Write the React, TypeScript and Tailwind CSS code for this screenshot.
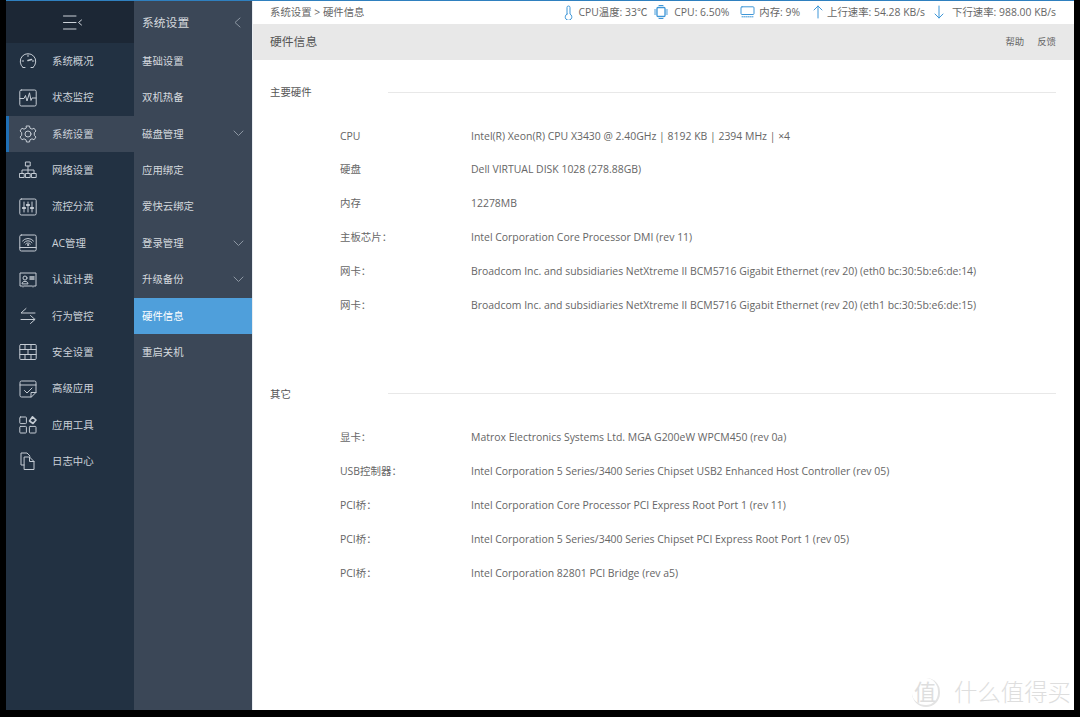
import type { ReactNode } from "react";

const stroke = { fill: "none", stroke: "currentColor", strokeWidth: 1, strokeLinecap: "round" as const, strokeLinejoin: "round" as const };

function Ico({ children, size = 18, className = "" }: { children: ReactNode, size?: number, className?: string }) {
    return <svg width={size} height={size} viewBox="0 0 18 18" className={className} {...stroke}>{children}</svg>
}

const icons: Record<string, ReactNode> = {
    gauge: <><path d="M4 15.5 A7.8 7.8 0 1 1 14 15.5" /><path d="M4 15.5 H6 M12 15.5 H14" /><path d="M9 8.5 L12.5 7.5" strokeWidth={1.6} /><path d="M9 3 V4.5 M3.2 9 H4.6 M14.8 9 H13.4" /></>,
    monitor: <><rect x="0.8" y="1" width="16.4" height="16" rx="1.5" /><path d="M1 9.5 H5 L6.5 6.5 L8 12 L10.5 3.8 L12 11.5 L13 9 H17" /></>,
    gear: <><circle cx="9" cy="9" r="3" /><path d="M7.5 1 H10.5 L11 3.2 L13 4.2 L15 3.2 L17 6 L15.3 7.6 V10.4 L17 12 L15 14.8 L13 13.8 L11 14.8 L10.5 17 H7.5 L7 14.8 L5 13.8 L3 14.8 L1 12 L2.7 10.4 V7.6 L1 6 L3 3.2 L5 4.2 L7 3.2 Z" /></>,
    network: <><rect x="6.8" y="1" width="4.4" height="4" /><rect x="0.8" y="12.5" width="4.4" height="4" /><rect x="6.8" y="12.5" width="4.4" height="4" /><rect x="12.8" y="12.5" width="4.4" height="4" /><path d="M9 5 V12.5 M3 12.5 V9 H15 V12.5" /></>,
    sliders: <><rect x="0.8" y="1" width="16.4" height="16" rx="1.5" /><path d="M5 4 V14 M9 4 V14 M13 4 V14" /><path d="M3.8 10 H6.2 M7.8 7 H10.2 M11.8 10 H14.2" strokeWidth={1.8} /></>,
    wifi: <><rect x="0.8" y="1" width="16.4" height="16" rx="1.5" /><path d="M1 13.5 H17" /><path d="M3.5 7 A7 7 0 0 1 14.5 7 M5 8.6 A5 5 0 0 1 13 8.6 M6.6 10 A3 3 0 0 1 11.4 10" /><circle cx="9" cy="11" r="0.7" /></>,
    card: <><path d="M3 15 H1 V2 H17 V15 H15 M5 15 H13" /><circle cx="6" cy="7" r="2" /><path d="M3 12.5 C3 9.5 9 9.5 9 12.5 Z" /><path d="M11 6 H15 M11 8 H15" strokeWidth={1.5} /><path d="M4 15 V16 M14 15 V16" /></>,
    swap: <><path d="M16 6 H2 L7 1.5" /><path d="M2 12.5 H16 L11.5 8.5 M16 12.5 L11.5 16.5" /></>,
    wall: <><rect x="0.8" y="1.5" width="16.4" height="15" rx="1" /><path d="M1 6.5 H17 M1 11.5 H17 M6 1.5 V6.5 M12 1.5 V6.5 M9 6.5 V11.5 M6 11.5 V16.5 M12 11.5 V16.5" /></>,
    note: <><path d="M12 17 H2.5 Q1 17 1 15.5 V2.5 Q1 1 2.5 1 H15.5 Q17 1 17 2.5 V12 Z" /><path d="M1 5 H17" /><path d="M5.5 10.5 L8 13 L13 8" /><path d="M12 17 V12.5 H17" /></>,
    apps: <><rect x="0.8" y="1" width="6.6" height="6.6" rx="0.8" /><rect x="0.8" y="10.4" width="6.6" height="6.6" rx="0.8" /><rect x="10.4" y="10.4" width="6.6" height="6.6" rx="0.8" /><path d="M13.5 0.8 L17 4 L14 7.5 L10.5 5 Z" strokeWidth={1.6} /></>,
    docs: <><path d="M5 13 H2 V1 H8 L11 4" /><path d="M5.5 5 H10.5 L15 9.5 V17.5 H5.5 Z" /><path d="M10.5 5 V9.5 H15" /></>,
};

const mainMenu = [
    { title: "系统概况", icon: "gauge" }, { title: "状态监控", icon: "monitor" }, { title: "系统设置", icon: "gear", active: true },
    { title: "网络设置", icon: "network" }, { title: "流控分流", icon: "sliders" }, { title: "AC管理", icon: "wifi" },
    { title: "认证计费", icon: "card" }, { title: "行为管控", icon: "swap" }, { title: "安全设置", icon: "wall" },
    { title: "高级应用", icon: "note" }, { title: "应用工具", icon: "apps" }, { title: "日志中心", icon: "docs" },
];

const subMenu = [
    { title: "基础设置" }, { title: "双机热备" }, { title: "磁盘管理", more: true }, { title: "应用绑定" }, { title: "爱快云绑定" },
    { title: "登录管理", more: true }, { title: "升级备份", more: true }, { title: "硬件信息", active: true }, { title: "重启关机" },
];

const mainHardware = [
    ["CPU", "Intel(R) Xeon(R) CPU X3430 @ 2.40GHz | 8192 KB | 2394 MHz | ×4"],
    ["硬盘", "Dell VIRTUAL DISK 1028 (278.88GB)"],
    ["内存", "12278MB"],
    ["主板芯片：", "Intel Corporation Core Processor DMI (rev 11)"],
    ["网卡：", "Broadcom Inc. and subsidiaries NetXtreme II BCM5716 Gigabit Ethernet (rev 20) (eth0 bc:30:5b:e6:de:14)"],
    ["网卡：", "Broadcom Inc. and subsidiaries NetXtreme II BCM5716 Gigabit Ethernet (rev 20) (eth1 bc:30:5b:e6:de:15)"],
];

const otherHardware = [
    ["显卡：", "Matrox Electronics Systems Ltd. MGA G200eW WPCM450 (rev 0a)"],
    ["USB控制器：", "Intel Corporation 5 Series/3400 Series Chipset USB2 Enhanced Host Controller (rev 05)"],
    ["PCI桥：", "Intel Corporation Core Processor PCI Express Root Port 1 (rev 11)"],
    ["PCI桥：", "Intel Corporation 5 Series/3400 Series Chipset PCI Express Root Port 1 (rev 05)"],
    ["PCI桥：", "Intel Corporation 82801 PCI Bridge (rev a5)"],
];

function Section({ title, rows, className }: { title: string, rows: string[][], className: string }) {
    return (
        <section className={className}>
            <div className="flex items-center h-6 pl-[17px] pr-[18px]">
                <h3 className="w-[118px] pt-[2px] text-[10.4px] text-[#555]">{title}</h3>
                <div className="flex-1 h-px bg-[#e8e8e8]"></div>
            </div>
            <div className="mt-[15px]">
                {rows.map((row, index) => (
                    <div key={index} className="flex items-center h-[33.8px] pt-px pl-[87px] text-[10.45px] text-[#666]">
                        <span className="w-[131px]">{row[0]}</span>
                        <span className="whitespace-nowrap">{row[1]}</span>
                    </div>
                ))}
            </div>
        </section>
    )
}

export default function App() {
    return (
        <div className="w-[1080px] h-[717px] bg-black pl-[6px] pr-[6px] pb-[7px] overflow-hidden font-['Open_Sans','Noto_Sans_CJK_SC',sans-serif]">
            <div className="relative flex h-full border-t border-[#2f80bf]">
                <aside className="w-[128px] bg-[#223142] text-[#ccd2d9]">
                    <div className="flex items-center justify-center h-[42px] bg-[#1c2735] pl-[5px]">
                        <svg width="20" height="15" viewBox="0 0 20 15" {...stroke}>
                            <path d="M0.5 1 H13 M0.5 7.5 H13 M0.5 14 H13" />
                            <path d="M18.5 5 L15.5 7.5 L18.5 10" />
                        </svg>
                    </div>
                    {mainMenu.map((item) => (
                        <div key={item.title} className={`flex items-center h-[36.4px] text-[10.4px] ${item.active ? 'bg-[#3b4757] border-l-[3px] border-[#1f6fb5] pl-[10px]' : 'pl-[13px]'}`}>
                            <Ico className="text-[#c5ccd4]">{icons[item.icon]}</Ico>
                            <span className="ml-[15px] pt-px whitespace-nowrap">{item.title}</span>
                        </div>
                    ))}
                </aside>
                <aside className="w-[118px] bg-[#3b4757] text-[#d5d9de]">
                    <div className="flex items-center justify-between h-[42px] pl-2 pr-[11px]">
                        <span className="pt-px text-[11.8px]">系统设置</span>
                        <svg width="7" height="11" viewBox="0 0 7 11" className="text-[#8d97a3]" {...stroke}><path d="M6 1 L1 5.5 L6 10" /></svg>
                    </div>
                    {subMenu.map((item) => (
                        <div key={item.title} className={`flex items-center justify-between h-[36.4px] pl-2 pr-2 text-[10.4px] ${item.active ? 'bg-[#4f9fdb] text-white' : ''}`}>
                            <span className="pt-px">{item.title}</span>
                            {item.more && <svg width="11" height="7" viewBox="0 0 11 7" className="text-[#8d97a3]" {...stroke}><path d="M1 1 L5.5 5.5 L10 1" /></svg>}
                        </div>
                    ))}
                </aside>
                <main className="flex-1 bg-white border-l border-[#e9edf1]">
                    <div className="flex items-center justify-between h-[23px] pl-[17px] text-[10.4px] text-[#666]">
                        <span>系统设置 &gt; 硬件信息</span>
                        <div className="flex items-center pr-[18px]">
                            <svg width="9" height="15" viewBox="0 0 9 15" className="text-[#3f97d8] mr-[5px]" {...stroke}><path d="M3 9 V2.5 A1.5 1.5 0 0 1 6 2.5 V9 A3.3 3.3 0 1 1 3 9 Z" /></svg>
                            <span>CPU温度: 33℃</span>
                            <svg width="14" height="14" viewBox="0 0 14 14" className="text-[#3f97d8] ml-[7px] mr-[6px]" {...stroke}><rect x="3" y="2.5" width="8" height="9" rx="1" strokeWidth={1.3} /><path d="M0.5 5 H2 M0.5 7 H2 M0.5 9 H2 M12 5 H13.5 M12 7 H13.5 M12 9 H13.5 M5 0.5 H9 M5 13.5 H9" /></svg>
                            <span>CPU: 6.50%</span>
                            <svg width="15" height="12" viewBox="0 0 15 12" className="text-[#3f97d8] ml-[11px] mr-[4px]" {...stroke}><rect x="1" y="0.8" width="13" height="7.7" rx="1" /><path d="M2 10.8 H13" strokeDasharray="1 1" /></svg>
                            <span>内存: 9%</span>
                            <svg width="10" height="14" viewBox="0 0 10 14" className="text-[#3f97d8] ml-[13px] mr-[4px]" {...stroke}><path d="M5 13 V1 M1 5 L5 1 L9 5" /></svg>
                            <span>上行速率: 54.28 KB/s</span>
                            <svg width="10" height="14" viewBox="0 0 10 14" className="text-[#3f97d8] ml-[9px] mr-[8px]" {...stroke}><path d="M5 1 V13 M1 9 L5 13 L9 9" /></svg>
                            <span>下行速率: 988.00 KB/s</span>
                        </div>
                    </div>
                    <div className="flex items-center justify-between h-9 bg-[#e8e8e8] pl-[17px] pr-[18px]">
                        <h2 className="text-[11.8px] text-[#555]">硬件信息</h2>
                        <div className="flex gap-[13px] text-[9.4px] text-[#666]">
                            <span>帮助</span>
                            <span>反馈</span>
                        </div>
                    </div>
                    <Section title="主要硬件" rows={mainHardware} className="mt-5" />
                    <Section title="其它" rows={otherHardware} className="mt-[60px]" />
                </main>
                {/* watermark */}
                <div className="absolute right-[3px] bottom-[3px] flex items-center gap-[14px] text-[#dedede]">
                    <span className="flex items-center justify-center w-[28px] h-[29px] rounded-full border-r-2 border-b-2 border-[#e3e3e3] text-[22px]">值</span>
                    <span className="text-[23.4px] leading-none font-light">什么值得买</span>
                </div>
            </div>
        </div>
    )
}
